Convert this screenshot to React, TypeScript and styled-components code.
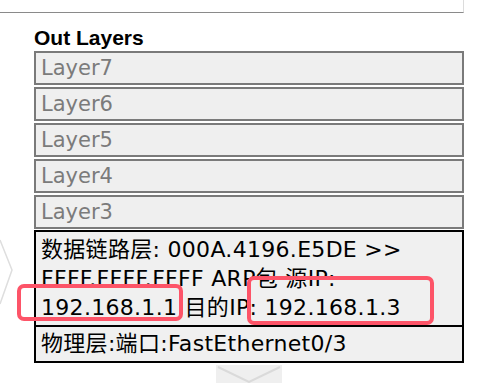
import React from 'react';
import styled, { createGlobalStyle } from 'styled-components';

const GlobalStyle = createGlobalStyle`
  body {
    margin: 0;
    background: #ffffff;
    font-family: "DejaVu Sans", "Noto Sans CJK SC", sans-serif;
  }
`;

const Page = styled.div`
  position: relative;
  width: 481px;
  height: 390px;
  overflow: hidden;
  background: #fff;
  display: flex;
  flex-direction: column;
`;

const TopPanel = styled.div`
  width: 463px;
  height: 12px;
  flex-shrink: 0;
  border-bottom: 1px solid #8a8a8a;
  border-right: 1px solid #dcdcdc;
`;

const Column = styled.div`
  width: 430px;
  margin-left: 34px;
  display: flex;
  flex-direction: column;
`;

const Title = styled.h3`
  margin: 0;
  height: 38px;
  padding-top: 13px;
  box-sizing: border-box;
  font-family: "Liberation Sans", Arial, sans-serif;
  font-weight: bold;
  font-size: 21px;
  line-height: 24px;
  color: #000;
`;

const LayerList = styled.div`
  display: flex;
  flex-direction: column;
  gap: 2px;
  margin-bottom: 1px;
`;

const LayerBox = styled.div`
  box-sizing: border-box;
  height: 34px;
  border: 2px solid #7a7a7a;
  background: #efefef;
  color: #7b7b7b;
  font-size: 21px;
  line-height: 30px;
  padding-left: 5px;
`;

const InfoBox = styled.div<{ $last?: boolean }>`
  position: relative;
  box-sizing: border-box;
  border: 2px solid #000;
  border-bottom-width: ${p => (p.$last ? '2px' : '0')};
  background: #f0f0f0;
  color: #000;
  font-size: 22px;
  line-height: 29px;
  letter-spacing: 0.3px;
  padding: ${p => (p.$last ? '2px 5px 3px' : '3px 5px 3px')};
`;

const Line = styled.div`
  white-space: nowrap;
`;

const Highlight = styled.div<{ $left: number; $top: number; $w: number; $h: number }>`
  position: absolute;
  left: ${p => p.$left}px;
  top: ${p => p.$top}px;
  width: ${p => p.$w}px;
  height: ${p => p.$h}px;
  box-sizing: border-box;
  border: 4px solid #fd5468;
  border-radius: 7px;
`;

const SideChevron = styled.svg`
  position: absolute;
  left: 0;
  top: 238px;
`;

const ArrowRow = styled.div`
  display: flex;
  justify-content: center;
  padding-top: 2px;
`;

const layers = ['Layer7', 'Layer6', 'Layer5', 'Layer4', 'Layer3'];

export default function App() {
  return (
    <Page>
      <GlobalStyle />
      <TopPanel />
      <SideChevron width="16" height="68" viewBox="0 0 16 68">
        <polyline points="0,2 12,32 0,66" fill="none" stroke="#dedede" strokeWidth="1.5" />
      </SideChevron>
      <Column>
        <Title>Out Layers</Title>
        <LayerList>
          {layers.map(l => (
            <LayerBox key={l}>{l}</LayerBox>
          ))}
        </LayerList>
        <InfoBox>
          <Line>数据链路层: 000A.4196.E5DE &gt;&gt;</Line>
          <Line>FFFF.FFFF.FFFF ARP包 源IP:</Line>
          <Line>192.168.1.1 目的IP: 192.168.1.3</Line>
          <Highlight $left={-19} $top={52} $w={166} $h={37} />
          <Highlight $left={211} $top={44} $w={187} $h={49} />
        </InfoBox>
        <InfoBox $last>物理层:端口:FastEthernet0/3</InfoBox>
        <ArrowRow>
          <svg width="66" height="18" viewBox="0 0 66 18">
            <rect x="0" y="0" width="66" height="18" fill="#efefef" />
            <polyline points="2,2 33,17 64,2" fill="none" stroke="#dadada" strokeWidth="2" />
          </svg>
        </ArrowRow>
      </Column>
    </Page>
  );
}
